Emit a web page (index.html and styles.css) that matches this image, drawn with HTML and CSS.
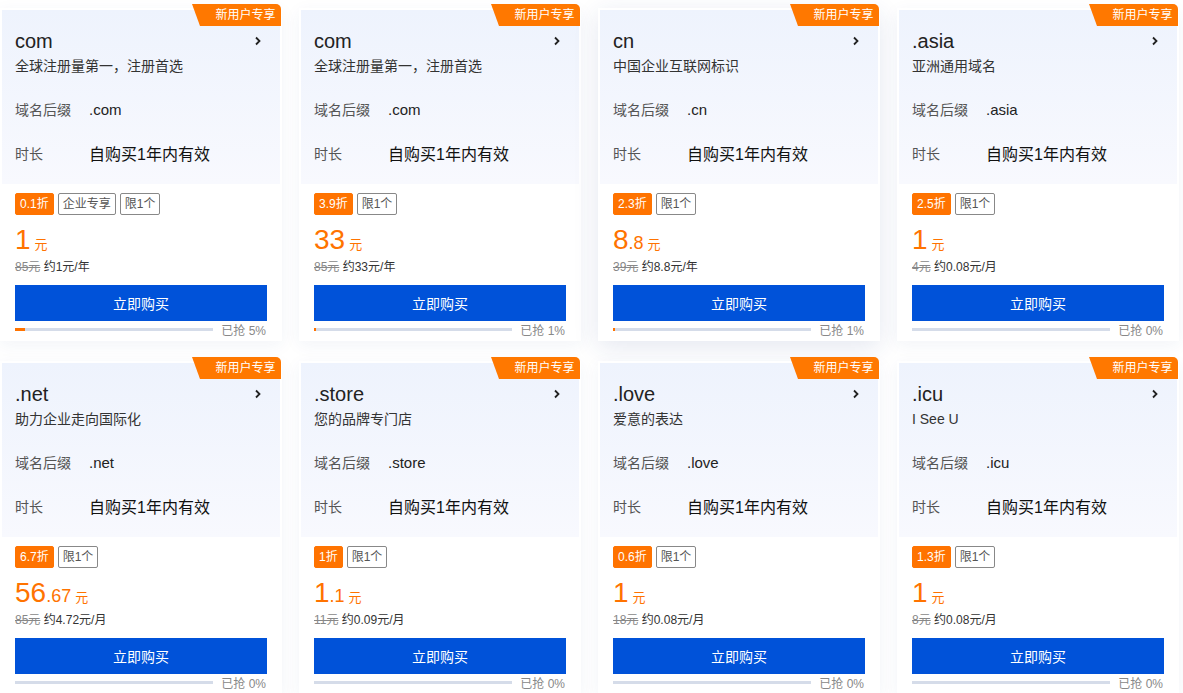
FILE: index.html
```html
<!DOCTYPE html>
<html>
    <head>
        <title>域名特惠</title>
        <link rel="stylesheet" href="styles.css">
    </head>
    <body>
    <div class="grid">

        <!-- com 企业 -->
        <div class="card">
            <span class="badge">新用户专享</span>
            <div class="card-top">
                <div class="title-row">
                    <span class="title">com</span>
                    <svg class="arrow" width="8" height="10" viewBox="0 0 8 10"><path d="M2 1.5 L5.5 5 L2 8.5" fill="none" stroke="#222" stroke-width="1.8"/></svg>
                </div>
                <div class="desc">全球注册量第一，注册首选</div>
                <div class="row"><span class="label">域名后缀</span><span class="suffix">.com</span></div>
                <div class="row"><span class="label">时长</span><span class="period">自购买1年内有效</span></div>
            </div>
            <div class="card-bottom">
                <div class="tags"><span class="tag tag-off">0.1折</span><span class="tag">企业专享</span><span class="tag">限1个</span></div>
                <div class="price"><span class="int">1</span><span class="unit">元</span></div>
                <div class="sub"><s>85元</s> 约1元/年</div>
                <button class="buy">立即购买</button>
                <div class="progress"><div class="bar"><div class="fill" style="width:5%"></div></div><span class="sold">已抢 5%</span></div>
            </div>
        </div>

        <!-- com -->
        <div class="card">
            <span class="badge">新用户专享</span>
            <div class="card-top">
                <div class="title-row">
                    <span class="title">com</span>
                    <svg class="arrow" width="8" height="10" viewBox="0 0 8 10"><path d="M2 1.5 L5.5 5 L2 8.5" fill="none" stroke="#222" stroke-width="1.8"/></svg>
                </div>
                <div class="desc">全球注册量第一，注册首选</div>
                <div class="row"><span class="label">域名后缀</span><span class="suffix">.com</span></div>
                <div class="row"><span class="label">时长</span><span class="period">自购买1年内有效</span></div>
            </div>
            <div class="card-bottom">
                <div class="tags"><span class="tag tag-off">3.9折</span><span class="tag">限1个</span></div>
                <div class="price"><span class="int">33</span><span class="unit">元</span></div>
                <div class="sub"><s>85元</s> 约33元/年</div>
                <button class="buy">立即购买</button>
                <div class="progress"><div class="bar"><div class="fill" style="width:1%"></div></div><span class="sold">已抢 1%</span></div>
            </div>
        </div>

        <!-- cn -->
        <div class="card hover">
            <span class="badge">新用户专享</span>
            <div class="card-top">
                <div class="title-row">
                    <span class="title">cn</span>
                    <svg class="arrow" width="8" height="10" viewBox="0 0 8 10"><path d="M2 1.5 L5.5 5 L2 8.5" fill="none" stroke="#222" stroke-width="1.8"/></svg>
                </div>
                <div class="desc">中国企业互联网标识</div>
                <div class="row"><span class="label">域名后缀</span><span class="suffix">.cn</span></div>
                <div class="row"><span class="label">时长</span><span class="period">自购买1年内有效</span></div>
            </div>
            <div class="card-bottom">
                <div class="tags"><span class="tag tag-off">2.3折</span><span class="tag">限1个</span></div>
                <div class="price"><span class="int">8</span><span class="dec">.8</span><span class="unit">元</span></div>
                <div class="sub"><s>39元</s> 约8.8元/年</div>
                <button class="buy">立即购买</button>
                <div class="progress"><div class="bar"><div class="fill" style="width:1%"></div></div><span class="sold">已抢 1%</span></div>
            </div>
        </div>

        <!-- asia -->
        <div class="card">
            <span class="badge">新用户专享</span>
            <div class="card-top">
                <div class="title-row">
                    <span class="title">.asia</span>
                    <svg class="arrow" width="8" height="10" viewBox="0 0 8 10"><path d="M2 1.5 L5.5 5 L2 8.5" fill="none" stroke="#222" stroke-width="1.8"/></svg>
                </div>
                <div class="desc">亚洲通用域名</div>
                <div class="row"><span class="label">域名后缀</span><span class="suffix">.asia</span></div>
                <div class="row"><span class="label">时长</span><span class="period">自购买1年内有效</span></div>
            </div>
            <div class="card-bottom">
                <div class="tags"><span class="tag tag-off">2.5折</span><span class="tag">限1个</span></div>
                <div class="price"><span class="int">1</span><span class="unit">元</span></div>
                <div class="sub"><s>4元</s> 约0.08元/月</div>
                <button class="buy">立即购买</button>
                <div class="progress"><div class="bar"><div class="fill" style="width:0%"></div></div><span class="sold">已抢 0%</span></div>
            </div>
        </div>

        <!-- net -->
        <div class="card">
            <span class="badge">新用户专享</span>
            <div class="card-top">
                <div class="title-row">
                    <span class="title">.net</span>
                    <svg class="arrow" width="8" height="10" viewBox="0 0 8 10"><path d="M2 1.5 L5.5 5 L2 8.5" fill="none" stroke="#222" stroke-width="1.8"/></svg>
                </div>
                <div class="desc">助力企业走向国际化</div>
                <div class="row"><span class="label">域名后缀</span><span class="suffix">.net</span></div>
                <div class="row"><span class="label">时长</span><span class="period">自购买1年内有效</span></div>
            </div>
            <div class="card-bottom">
                <div class="tags"><span class="tag tag-off">6.7折</span><span class="tag">限1个</span></div>
                <div class="price"><span class="int">56</span><span class="dec">.67</span><span class="unit">元</span></div>
                <div class="sub"><s>85元</s> 约4.72元/月</div>
                <button class="buy">立即购买</button>
                <div class="progress"><div class="bar"><div class="fill" style="width:0%"></div></div><span class="sold">已抢 0%</span></div>
            </div>
        </div>

        <!-- store -->
        <div class="card">
            <span class="badge">新用户专享</span>
            <div class="card-top">
                <div class="title-row">
                    <span class="title">.store</span>
                    <svg class="arrow" width="8" height="10" viewBox="0 0 8 10"><path d="M2 1.5 L5.5 5 L2 8.5" fill="none" stroke="#222" stroke-width="1.8"/></svg>
                </div>
                <div class="desc">您的品牌专门店</div>
                <div class="row"><span class="label">域名后缀</span><span class="suffix">.store</span></div>
                <div class="row"><span class="label">时长</span><span class="period">自购买1年内有效</span></div>
            </div>
            <div class="card-bottom">
                <div class="tags"><span class="tag tag-off">1折</span><span class="tag">限1个</span></div>
                <div class="price"><span class="int">1</span><span class="dec">.1</span><span class="unit">元</span></div>
                <div class="sub"><s>11元</s> 约0.09元/月</div>
                <button class="buy">立即购买</button>
                <div class="progress"><div class="bar"><div class="fill" style="width:0%"></div></div><span class="sold">已抢 0%</span></div>
            </div>
        </div>

        <!-- love -->
        <div class="card">
            <span class="badge">新用户专享</span>
            <div class="card-top">
                <div class="title-row">
                    <span class="title">.love</span>
                    <svg class="arrow" width="8" height="10" viewBox="0 0 8 10"><path d="M2 1.5 L5.5 5 L2 8.5" fill="none" stroke="#222" stroke-width="1.8"/></svg>
                </div>
                <div class="desc">爱意的表达</div>
                <div class="row"><span class="label">域名后缀</span><span class="suffix">.love</span></div>
                <div class="row"><span class="label">时长</span><span class="period">自购买1年内有效</span></div>
            </div>
            <div class="card-bottom">
                <div class="tags"><span class="tag tag-off">0.6折</span><span class="tag">限1个</span></div>
                <div class="price"><span class="int">1</span><span class="unit">元</span></div>
                <div class="sub"><s>18元</s> 约0.08元/月</div>
                <button class="buy">立即购买</button>
                <div class="progress"><div class="bar"><div class="fill" style="width:0%"></div></div><span class="sold">已抢 0%</span></div>
            </div>
        </div>

        <!-- icu -->
        <div class="card">
            <span class="badge">新用户专享</span>
            <div class="card-top">
                <div class="title-row">
                    <span class="title">.icu</span>
                    <svg class="arrow" width="8" height="10" viewBox="0 0 8 10"><path d="M2 1.5 L5.5 5 L2 8.5" fill="none" stroke="#222" stroke-width="1.8"/></svg>
                </div>
                <div class="desc">I See U</div>
                <div class="row"><span class="label">域名后缀</span><span class="suffix">.icu</span></div>
                <div class="row"><span class="label">时长</span><span class="period">自购买1年内有效</span></div>
            </div>
            <div class="card-bottom">
                <div class="tags"><span class="tag tag-off">1.3折</span><span class="tag">限1个</span></div>
                <div class="price"><span class="int">1</span><span class="unit">元</span></div>
                <div class="sub"><s>8元</s> 约0.08元/月</div>
                <button class="buy">立即购买</button>
                <div class="progress"><div class="bar"><div class="fill" style="width:0%"></div></div><span class="sold">已抢 0%</span></div>
            </div>
        </div>

    </div>
    </body>
</html>
```

FILE: styles.css
```css
body{
    margin: 0;
    padding: 8px 0 0 0;
    background: #fff;
    font-family: "Liberation Sans", Arial, "Noto Sans CJK SC", sans-serif;
    color: #333;
}
.grid{
    display: grid;
    grid-template-columns: repeat(4, 282px);
    column-gap: 17px;
    row-gap: 20px;
}
.card{
    position: relative;
    background: #fff;
    padding: 2px;
    box-shadow: 0 4px 16px rgba(30, 60, 130, 0.06);
}
.card.hover{
    box-shadow: 0 6px 24px rgba(30, 60, 130, 0.12);
}
.badge{
    position: absolute;
    top: -4px;
    right: 1px;
    width: 89px;
    height: 22px;
    box-sizing: border-box;
    padding-left: 18px;
    background: #ff7800;
    color: #fff;
    font-size: 12px;
    line-height: 22px;
    text-align: center;
    border-top-right-radius: 5px;
    clip-path: polygon(0 0, 100% 0, 100% 100%, 8px 100%);
}

/* top half */
.card-top{
    height: 174px;
    box-sizing: border-box;
    padding: 17px 14px 8px 13px;
    background: linear-gradient(180deg, #eef3fd, #f8f9fe);
}
.title-row{
    display: flex;
    align-items: center;
    justify-content: space-between;
    height: 28px;
}
.title{
    font-size: 20px;
    color: #222;
}
.arrow{
    margin-right: 4px;
    margin-top: 0;
}
.desc{
    margin-top: 1px;
    font-size: 14px;
    line-height: 21px;
    color: #333;
}
.row{
    display: flex;
    align-items: center;
    height: 44px;
}
.desc + .row{
    margin-top: 10px;
}
.label{
    width: 74px;
    font-size: 14px;
    color: #555;
}
.suffix{
    font-size: 15px;
    color: #222;
}
.period{
    font-size: 16px;
    color: #111;
}

/* bottom half */
.card-bottom{
    padding: 9px 14px 2px 13px;
}
.tags{
    display: flex;
    gap: 4px;
    height: 22px;
}
.tag{
    box-sizing: border-box;
    height: 22px;
    line-height: 20px;
    padding: 0 4px;
    border: 1px solid #888;
    border-radius: 2px;
    font-size: 12px;
    color: #555;
}
.tag-off{
    background: #ff7300;
    border-color: #ff7300;
    color: #fff;
}
.price{
    margin-top: 9px;
    height: 32px;
    line-height: 32px;
    color: #ff7300;
    white-space: nowrap;
}
.int{
    font-size: 28px;
}
.dec{
    font-size: 18px;
}
.unit{
    font-size: 13px;
    margin-left: 4px;
}
.sub{
    margin-top: 2px;
    font-size: 12px;
    line-height: 18px;
    color: #333;
}
.sub s{
    color: #888;
}
.buy{
    display: block;
    margin-top: 9px;
    width: 252px;
    height: 36px;
    border: 0;
    background: #0052d9;
    color: #fff;
    font-family: inherit;
    font-size: 14px;
    cursor: pointer;
}
.progress{
    display: flex;
    align-items: center;
    height: 16px;
}
.bar{
    width: 198px;
    height: 3px;
    background: #d5dce9;
}
.fill{
    height: 3px;
    background: #ff7300;
}
.sold{
    margin-left: auto;
    font-size: 12px;
    color: #888;
}
```
